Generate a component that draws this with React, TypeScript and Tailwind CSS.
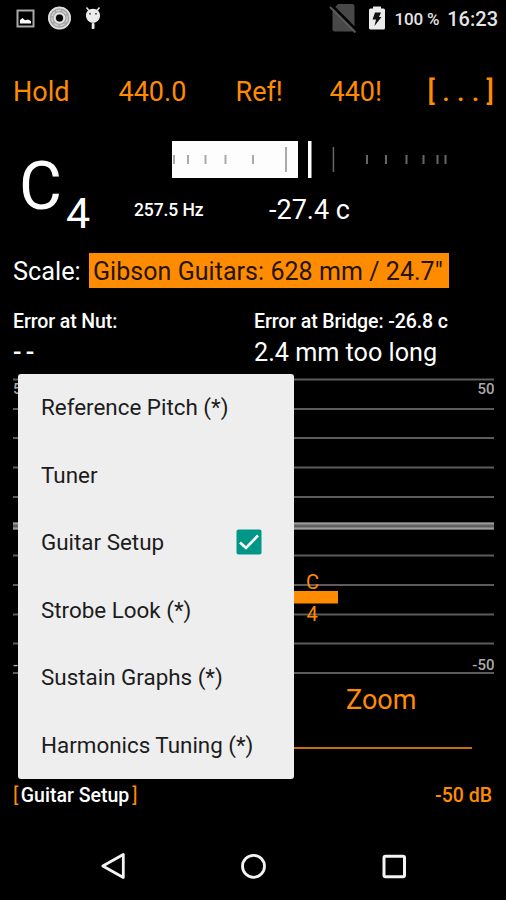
import React from 'react';

const menuItems = [
  { label: 'Reference Pitch (*)', checked: false },
  { label: 'Tuner', checked: false },
  { label: 'Guitar Setup', checked: true },
  { label: 'Strobe Look (*)', checked: false },
  { label: 'Sustain Graphs (*)', checked: false },
  { label: 'Harmonics Tuning (*)', checked: false },
];

const gridLines = [1, 30.5, 59.5, 89, 118.5, 177, 206.5, 236, 265, 294.5];

const darkTicks = [2, 16, 33.5, 53.5, 81];
const lightTicks = [195, 214, 234.5, 251.5, 265.5, 273.5];

function StatusBar() {
  return (
    <div className="h-9 mb-2 flex items-center justify-between pl-[16px] pr-[8px] text-[#e4e4e4]">
      <div className="flex items-center gap-[13px]">
        <svg className="w-[19px] h-[19px]" viewBox="0 0 19 19" fill="none">
          <rect x="1.5" y="1.5" width="16" height="16" stroke="#a8a8a8" strokeWidth="2" />
          <path d="M4 14.5v-3.5l2.5-2 2.5 2.3 3-.8 3 1.5v2.5z" fill="#fff" />
        </svg>
        <svg className="w-6 h-6" viewBox="0 0 24 24" fill="none">
          <circle cx="11.5" cy="12" r="7.5" stroke="#a4a4a4" strokeWidth="8" />
          <circle cx="11.5" cy="12" r="10.6" stroke="#e0e0e0" strokeWidth="1.5" />
          <circle cx="11.5" cy="12" r="7.7" stroke="#d4d4d4" strokeWidth="1.2" strokeDasharray="5 1.5" />
          <circle cx="11.5" cy="12" r="4.9" stroke="#e8e8e8" strokeWidth="1.8" />
        </svg>
        <svg className="w-4 h-6" viewBox="0 0 16 24" fill="#ececec">
          <path d="M1.5 1.5l2.5 3M14.5 1.5l-2.5 3" stroke="#ececec" strokeWidth="1.5" />
          <path d="M8 2.8c4.3 0 7 3 7 6.7 0 4-3 7.3-7 7.3s-7-3.3-7-7.3c0-3.7 2.7-6.7 7-6.7z" />
          <rect x="6.7" y="17" width="2.8" height="6" rx="1" />
          <circle cx="5" cy="7.8" r="1" fill="#555" />
          <circle cx="11" cy="7.8" r="1" fill="#555" />
        </svg>
      </div>
      <div className="flex items-center">
        <svg className="w-[28px] h-[30px]" viewBox="0 0 28 30">
          <path d="M9 1h14q2.5 0 2.5 2.5v23q0 2-2.5 2H6q-2.5 0-2.5-2V7z" fill="#484848" />
          <path d="M3 2.5l26 26" stroke="#000" strokeWidth="2.5" />
          <path d="M1 4l25.5 25.5" stroke="#5a5a5a" strokeWidth="2" />
        </svg>
        <svg className="w-[16px] h-[24px] ml-[12px] mr-px" viewBox="0 0 16 24">
          <path d="M0 4q0-1.5 1.5-1.5H4V.5h8v2h2.5q1.5 0 1.5 1.5v18q0 1.5-1.5 1.5h-13Q0 23.5 0 22z" fill="#ececec" />
          <path d="M6 6.5h6l-2 4.5h2.5L5.5 20l1.5-6.5H3.5z" fill="#111" />
        </svg>
        <span className="ml-[9px] text-[17px] leading-none mt-[2px] font-medium tracking-[-0.2px]">100 %</span>
        <span className="ml-[8px] text-[20px] leading-none mt-[2px] font-medium">16:23</span>
      </div>
    </div>
  );
}

function CentMeter() {
  return (
    <svg className="w-[278px] h-[37px] shrink-0" viewBox="0 0 278 37">
      <rect x="0" y="0" width="126" height="37" fill="#fdfdfd" />
      {darkTicks.map((x) => (
        <rect key={x} x={x - 1} y="14" width="2" height="9" fill="#aaa" />
      ))}
      <rect x="113" y="6" width="2" height="25" fill="#aaa" />
      <rect x="136" y="0" width="3.5" height="37" fill="#fff" />
      <rect x="160.7" y="6" width="1.5" height="25" fill="#666" />
      {lightTicks.map((x) => (
        <rect key={x} x={x - 1} y="14" width="2" height="9" fill="#666" />
      ))}
    </svg>
  );
}

function PitchGraph() {
  return (
    <svg className="mt-[11px] ml-[13px] w-[481px] h-[296px] shrink-0" viewBox="0 0 481 296">
      {gridLines.map((y) => (
        <rect key={y} x="0" y={y - 0.5} width="481" height="2" fill="#5c5c5c" />
      ))}
      <rect x="0" y="144.5" width="481" height="7" fill="#606060" />
      <rect x="0" y="144.5" width="481" height="2" fill="#9c9c9c" />
      <rect x="0" y="149.5" width="481" height="2" fill="#9c9c9c" />
      <g fontSize="15" fontWeight="500" fill="#aaa">
        <text x="0" y="16">50</text>
        <text x="0" y="292">-50</text>
        <text x="481.5" y="16" textAnchor="end">50</text>
        <text x="481.5" y="292" textAnchor="end">-50</text>
      </g>
      <rect x="230" y="213" width="95" height="12.5" fill="#ff8c00" />
      <g fontSize="20" fill="#ff8c00" textAnchor="middle">
        <text x="299.5" y="210.5">C</text>
        <text x="299" y="242.5">4</text>
      </g>
    </svg>
  );
}

function OverflowMenu() {
  return (
    <div className="absolute left-[18px] top-[374px] w-[276px] rounded-[3px] bg-[#eeeeee] text-[#1c1c1c]">
      {menuItems.map((item) => (
        <div key={item.label} className="h-[67.5px] pt-px pl-[23px] pr-[32px] flex items-center justify-between text-[22.4px] whitespace-nowrap">
          <span>{item.label}</span>
          {item.checked && (
            <svg className="w-[26px] h-[26px] -mt-[3px]" viewBox="0 0 26 26">
              <rect x="0.5" y="0.5" width="25" height="25" rx="2" fill="#009688" />
              <path d="M4 13.5l6 5.5L22 6.5" fill="none" stroke="#fff" strokeWidth="2.6" />
            </svg>
          )}
        </div>
      ))}
    </div>
  );
}

export default function App() {
  return (
    <div className="relative w-[506px] h-[900px] overflow-hidden bg-black text-white font-['Roboto',sans-serif] flex flex-col">
      <StatusBar />

      {/* Toolbar */}
      <div className="h-24 grid grid-cols-[105.5px_117px_94px_98px_1fr] items-center pl-[13px] text-[27px] text-[#ff8c00] whitespace-nowrap">
        <span>Hold</span>
        <span>440.0</span>
        <span>Ref!</span>
        <span>440!</span>
        <span className="font-medium tracking-[7.3px]">[...]</span>
      </div>

      {/* Detected note and deviation */}
      <div className="h-[101px] flex">
        <div className="w-[134px] shrink-0 flex items-start pl-[19px]">
          <span className="text-[66px] leading-[94px]">C</span>
          <span className="text-[43px] leading-[94px] mt-[26px] ml-1">4</span>
        </div>
        <div className="flex flex-col pt-px">
          <div className="pl-[38px] h-[37px]">
            <CentMeter />
          </div>
          <div className="h-[63px] pt-px flex items-center whitespace-nowrap">
            <span className="w-[135px] text-[17.5px] font-medium tracking-[-0.1px]">257.5 Hz</span>
            <span className="text-[27px]">-27.4 c</span>
          </div>
        </div>
      </div>

      {/* Scale length */}
      <div className="mt-[11px] h-[37px] flex items-center pl-[13px] whitespace-nowrap">
        <span className="w-[76px] pt-[2px] text-[25.3px]">Scale:</span>
        <span className="w-[360px] h-[35px] leading-[37px] text-[25px] tracking-[0.05px] bg-[#ff8c00] text-[#241400] pl-[4px]">Gibson Guitars: 628 mm / 24.7"</span>
      </div>

      {/* Intonation errors */}
      <div className="mt-[18px] grid grid-cols-[241px_1fr] pl-[13px] leading-[30px] whitespace-nowrap">
        <span className="text-[19.5px] font-medium tracking-[-0.1px]">Error at Nut:</span>
        <span className="text-[19.5px] font-medium tracking-[-0.1px]">Error at Bridge: -26.8 c</span>
        <span className="pt-px -mb-px text-[25px] font-medium tracking-[-1px]">- -</span>
        <span className="pt-px -mb-px text-[25.2px]">2.4 mm too long</span>
      </div>

      <PitchGraph />

      <div className="h-[51px] pt-px flex items-center pl-[346px] text-[27px] text-[#ff8c00]">Zoom</div>
      <div className="mt-[22px] ml-[40px] w-[432px] h-[2px] bg-[#c96f08]"></div>

      <div className="h-[92px] pt-px flex items-center justify-between pl-[13px] pr-[14px] text-[20px] text-[#ff8c00]">
        <span>
          [<span className="pl-[2.5px] pr-[3px] text-[19.5px] font-medium text-white">Guitar Setup</span>]
        </span>
        <span className="text-[19.5px] font-medium">-50 dB</span>
      </div>

      {/* Navigation keys */}
      <div className="h-[50px] flex items-center justify-between pl-[100px] pr-[98px]">
        <svg className="w-[28px] h-[28px]" viewBox="0 0 28 28" fill="none" stroke="#f4f4f4" strokeWidth="2.8" strokeLinejoin="round">
          <path d="M23.3 2.5v23L2.8 14z" />
        </svg>
        <svg className="w-[28px] h-[28px]" viewBox="0 0 28 28" fill="none" stroke="#f4f4f4" strokeWidth="2.8">
          <circle cx="13.5" cy="14.3" r="11" />
        </svg>
        <svg className="w-[28px] h-[28px]" viewBox="0 0 28 28" fill="none" stroke="#f4f4f4" strokeWidth="3">
          <rect x="4" y="4.300" width="20.5" height="20.5" rx="1.5" />
        </svg>
      </div>

      <OverflowMenu />
    </div>
  );
}
